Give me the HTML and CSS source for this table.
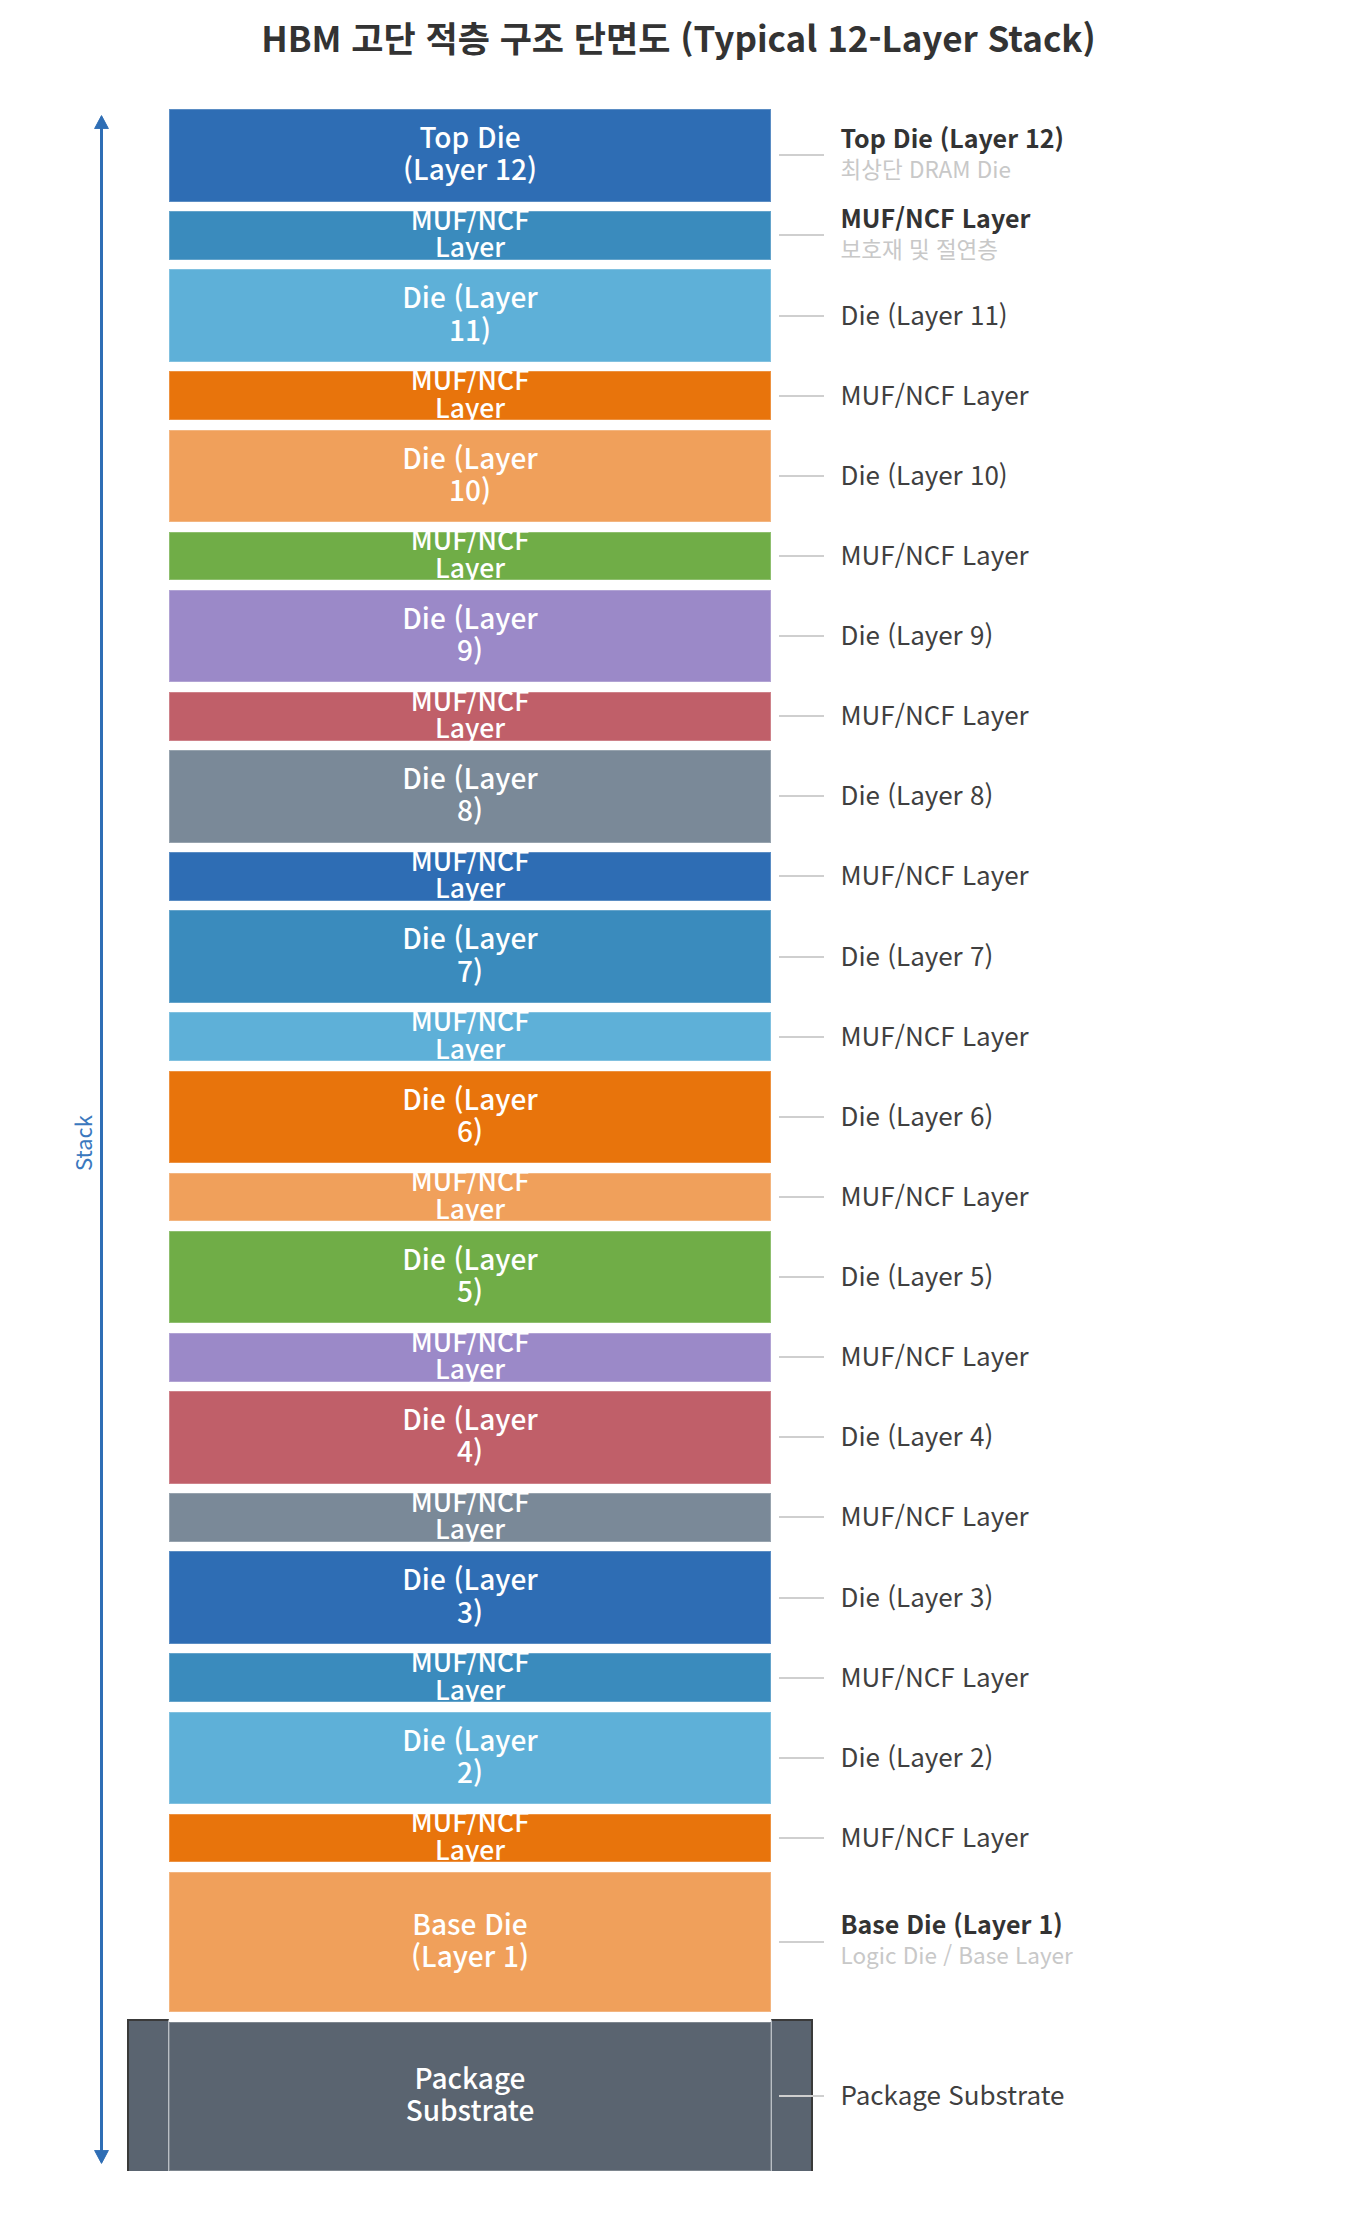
FILE: index.html
```html
<!DOCTYPE html>
<html lang="ko">
<head>
<meta charset="utf-8">
<title>HBM 고단 적층 구조 단면도</title>
<link rel="stylesheet" href="styles.css">
</head>
<body>
<div class="page">
  <h1 class="title">HBM 고단 적층 구조 단면도 (Typical 12-Layer Stack)</h1>
  <div class="chart">
    <div class="axis">
      <span class="axis-label">Stack</span>
      <div class="arrow">
        <svg class="head" width="15" height="14" viewBox="0 0 15 14"><path d="M7.5 0.6 L14.4 13.6 L0.6 13.6 Z"/></svg>
        <div class="shaft"></div>
        <svg class="head" width="15" height="14" viewBox="0 0 15 14"><path d="M0.6 0.4 L14.4 0.4 L7.5 13.4 Z"/></svg>
      </div>
    </div>
    <div class="stack">
      <div class="row">
        <div class="layer die blue"><span class="txt">Top Die<br>(Layer 12)</span></div>
        <div class="leader"></div>
        <div class="label"><div class="main strong">Top Die (Layer 12)</div><div class="sub">최상단 DRAM Die</div></div>
      </div>
      <div class="row">
        <div class="layer muf teal"><span class="txt">MUF/NCF<br>Layer</span></div>
        <div class="leader"></div>
        <div class="label"><div class="main strong">MUF/NCF Layer</div><div class="sub">보호재 및 절연층</div></div>
      </div>
      <div class="row">
        <div class="layer die sky"><span class="txt">Die (Layer<br>11)</span></div>
        <div class="leader"></div>
        <div class="label"><div class="main">Die (Layer 11)</div></div>
      </div>
      <div class="row">
        <div class="layer muf orange"><span class="txt">MUF/NCF<br>Layer</span></div>
        <div class="leader"></div>
        <div class="label"><div class="main">MUF/NCF Layer</div></div>
      </div>
      <div class="row">
        <div class="layer die peach"><span class="txt">Die (Layer<br>10)</span></div>
        <div class="leader"></div>
        <div class="label"><div class="main">Die (Layer 10)</div></div>
      </div>
      <div class="row">
        <div class="layer muf green"><span class="txt">MUF/NCF<br>Layer</span></div>
        <div class="leader"></div>
        <div class="label"><div class="main">MUF/NCF Layer</div></div>
      </div>
      <div class="row">
        <div class="layer die purple"><span class="txt">Die (Layer<br>9)</span></div>
        <div class="leader"></div>
        <div class="label"><div class="main">Die (Layer 9)</div></div>
      </div>
      <div class="row">
        <div class="layer muf red"><span class="txt">MUF/NCF<br>Layer</span></div>
        <div class="leader"></div>
        <div class="label"><div class="main">MUF/NCF Layer</div></div>
      </div>
      <div class="row">
        <div class="layer die gray"><span class="txt">Die (Layer<br>8)</span></div>
        <div class="leader"></div>
        <div class="label"><div class="main">Die (Layer 8)</div></div>
      </div>
      <div class="row">
        <div class="layer muf blue"><span class="txt">MUF/NCF<br>Layer</span></div>
        <div class="leader"></div>
        <div class="label"><div class="main">MUF/NCF Layer</div></div>
      </div>
      <div class="row">
        <div class="layer die teal"><span class="txt">Die (Layer<br>7)</span></div>
        <div class="leader"></div>
        <div class="label"><div class="main">Die (Layer 7)</div></div>
      </div>
      <div class="row">
        <div class="layer muf sky"><span class="txt">MUF/NCF<br>Layer</span></div>
        <div class="leader"></div>
        <div class="label"><div class="main">MUF/NCF Layer</div></div>
      </div>
      <div class="row">
        <div class="layer die orange"><span class="txt">Die (Layer<br>6)</span></div>
        <div class="leader"></div>
        <div class="label"><div class="main">Die (Layer 6)</div></div>
      </div>
      <div class="row">
        <div class="layer muf peach"><span class="txt">MUF/NCF<br>Layer</span></div>
        <div class="leader"></div>
        <div class="label"><div class="main">MUF/NCF Layer</div></div>
      </div>
      <div class="row">
        <div class="layer die green"><span class="txt">Die (Layer<br>5)</span></div>
        <div class="leader"></div>
        <div class="label"><div class="main">Die (Layer 5)</div></div>
      </div>
      <div class="row">
        <div class="layer muf purple"><span class="txt">MUF/NCF<br>Layer</span></div>
        <div class="leader"></div>
        <div class="label"><div class="main">MUF/NCF Layer</div></div>
      </div>
      <div class="row">
        <div class="layer die red"><span class="txt">Die (Layer<br>4)</span></div>
        <div class="leader"></div>
        <div class="label"><div class="main">Die (Layer 4)</div></div>
      </div>
      <div class="row">
        <div class="layer muf gray"><span class="txt">MUF/NCF<br>Layer</span></div>
        <div class="leader"></div>
        <div class="label"><div class="main">MUF/NCF Layer</div></div>
      </div>
      <div class="row">
        <div class="layer die blue"><span class="txt">Die (Layer<br>3)</span></div>
        <div class="leader"></div>
        <div class="label"><div class="main">Die (Layer 3)</div></div>
      </div>
      <div class="row">
        <div class="layer muf teal"><span class="txt">MUF/NCF<br>Layer</span></div>
        <div class="leader"></div>
        <div class="label"><div class="main">MUF/NCF Layer</div></div>
      </div>
      <div class="row">
        <div class="layer die sky"><span class="txt">Die (Layer<br>2)</span></div>
        <div class="leader"></div>
        <div class="label"><div class="main">Die (Layer 2)</div></div>
      </div>
      <div class="row">
        <div class="layer muf orange"><span class="txt">MUF/NCF<br>Layer</span></div>
        <div class="leader"></div>
        <div class="label"><div class="main">MUF/NCF Layer</div></div>
      </div>
      <div class="row">
        <div class="layer die base peach"><span class="txt">Base Die<br>(Layer 1)</span></div>
        <div class="leader"></div>
        <div class="label"><div class="main strong">Base Die (Layer 1)</div><div class="sub">Logic Die / Base Layer</div></div>
      </div>
      <div class="row">
        <div class="layer die substrate slate"><span class="txt">Package<br>Substrate</span></div>
        <div class="leader over"></div>
        <div class="label"><div class="main">Package Substrate</div></div>
      </div>
    </div>
  </div>
</div>
</body>
</html>
```
FILE: styles.css
```css
* { box-sizing: border-box; }

html, body {
  margin: 0;
  padding: 0;
  background: #ffffff;
}

body {
  font-family: "Noto Sans CJK KR", "Noto Sans", sans-serif;
  color: #333333;
}

.page {
  width: 1357px;
  padding-top: 13.5px;
}

.title {
  margin: 0 0 49.5px;
  font-size: 35px;
  line-height: 46px;
  font-weight: 700;
  text-align: center;
  color: #333333;
}

.chart {
  display: flex;
}

/* ---- vertical axis ---- */
.axis {
  width: 169px;
  flex-shrink: 0;
  display: flex;
  align-items: center;
  padding-left: 71.4px;
}

.axis-label {
  writing-mode: vertical-rl;
  transform: rotate(180deg);
  width: 22px;
  font-size: 22px;
  line-height: 22px;
  color: #3a78be;
  margin-top: 5px;
  white-space: nowrap;
}

.arrow {
  align-self: stretch;
  width: 15px;
  margin: 6px 0 6.85px 0.8px;
  display: flex;
  flex-direction: column;
  align-items: center;
}

.head {
  display: block;
  flex-shrink: 0;
}

.head path {
  fill: #2f6eb5;
  stroke: #2f6eb5;
  stroke-width: 1;
  stroke-linejoin: round;
}

.shaft {
  flex: 1;
  width: 3px;
  background: #2f6eb5;
  margin: -1px 0;
}

/* ---- stack ---- */
.stack {
  display: flex;
  flex-direction: column;
  gap: 9.45px;
}

.row {
  display: flex;
  align-items: center;
}

.layer {
  width: 602px;
  flex-shrink: 0;
  display: flex;
  align-items: center;
  justify-content: center;
  padding-bottom: 6px;
  border: 1px solid rgba(255, 255, 255, 0.22);
  color: #ffffff;
  text-align: center;
  white-space: nowrap;
  font-weight: 500;
}

.die { height: 92.7px; }
.muf { height: 48.7px; }
.base { height: 140.4px; }
.substrate {
  height: 149.7px;
  position: relative;
}

.die .txt {
  font-size: 28px;
  line-height: 32.3px;
}

.muf .txt {
  font-size: 26.5px;
  line-height: 27.7px;
}

/* side blocks flanking the package substrate */
.substrate::before,
.substrate::after {
  content: "";
  position: absolute;
  top: -3.7px;
  bottom: -3.6px;
  width: 38.4px;
  background: #5a6470;
  border: 2.5px solid #3a3a3a;
}

.substrate::before {
  left: -42.7px;
  border-right: 1.5px solid #b9bec4;
}

.substrate::after {
  right: -42.7px;
  border-left: 1.5px solid #b9bec4;
}

.blue { background-color: #2e6db4; }
.teal { background-color: #3a8bbd; }
.sky { background-color: #5eb0d8; }
.orange { background-color: #e8740c; }
.peach { background-color: #f0a05b; }
.green { background-color: #70ad47; }
.purple { background-color: #9b89c8; }
.red { background-color: #c05f69; }
.gray { background-color: #7a8998; }
.slate { background-color: #5a6470; }

.leader {
  width: 45px;
  height: 2px;
  margin-left: 8px;
  background: #cfcfcf;
  flex-shrink: 0;
}

.leader.over {
  position: relative;
  z-index: 1;
}

.label {
  height: 0;
  margin-left: 16.5px;
  margin-bottom: 5px;
  display: flex;
  flex-direction: column;
  justify-content: center;
  white-space: nowrap;
}

.main {
  font-size: 26px;
  line-height: 31px;
  color: #404040;
}

.main.strong {
  font-size: 25px;
  font-weight: 700;
  color: #333333;
}

.sub {
  font-size: 22.5px;
  line-height: 31px;
  color: #c8c8c8;
}
```
